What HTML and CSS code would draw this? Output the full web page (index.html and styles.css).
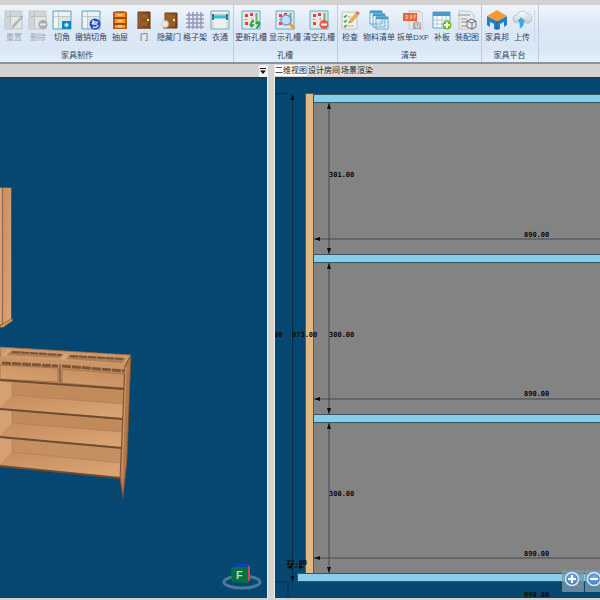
FILE: index.html
```html
<!DOCTYPE html>
<html lang="zh-CN">
<head>
<meta charset="utf-8">
<title>家具设计</title>
<link rel="stylesheet" href="styles.css">
</head>
<body>
<svg class="defs" aria-hidden="true">
  <defs>
    <linearGradient id="wood" x1="0" x2="1" y1="0" y2="0"><stop offset="0" stop-color="#dba473"/><stop offset="1" stop-color="#c68c5c"/></linearGradient>
    <linearGradient id="shelf" x1="0" x2="1" y1="0" y2="1"><stop offset="0" stop-color="#c68d5e"/><stop offset="1" stop-color="#dba677"/></linearGradient>
    <linearGradient id="drawer" x1="0" x2="1" y1="1" y2="0"><stop offset="0" stop-color="#daa574"/><stop offset="1" stop-color="#c48a5a"/></linearGradient>
    <linearGradient id="cloud" x1="0" x2="0" y1="0" y2="1"><stop offset="0" stop-color="#fff"/><stop offset="1" stop-color="#c5cbd0"/></linearGradient>
    <linearGradient id="door" x1="0" x2="1" y1="0" y2="0"><stop offset="0" stop-color="#b06e2b"/><stop offset="1" stop-color="#7b451c"/></linearGradient>
    <radialGradient id="lens" cx=".5" cy=".4" r=".6"><stop offset="0" stop-color="#7db7f2"/><stop offset="1" stop-color="#3577c4"/></radialGradient>
    <symbol id="board" viewBox="0 0 20 20"><path d="M1 1h18v18H1z" fill="#d7e1e5" stroke="#58a8c6"/><path d="M2 2h4v16H2zM6 2h12v4H6z" fill="#f2f2f0"/><path d="M7 7h11v11H7z" fill="#e1e4e4"/><path d="M6.500 2v16M2 6.500h16" stroke="#b8bdbe" stroke-width=".7"/></symbol>
    <symbol id="board-off" viewBox="0 0 20 20"><path d="M1 1h17v18H1z" fill="#dadddf" stroke="#c0c4c8"/><path d="M2 2h4v16H2zM6 2h12v4H6z" fill="#d2d4d7"/><path d="M6.500 2v16M2 6.500h16" stroke="#b7babd" stroke-width=".8"/><path d="M7 7h10v11H7z" fill="#e4e5e7"/></symbol>
    <symbol id="holes" viewBox="0 0 20 20"><path d="M1 1h18v18H1z" fill="#e4e9e7" stroke="#5eadd0"/><path d="M4 4h3v3H4zM9 3h3v3H9zM4 12h3v3H4z" fill="#f13c48"/><path d="M10 9l2-1v2zM4 9h2v1H4z" fill="#d47c7c"/><path d="M15.500 3v11" stroke="#5abd67" stroke-width="2"/></symbol>
  </defs>
</svg>

<header class="ribbon">
  <section class="group furniture">
    <div class="tools">
      <button class="tool" disabled><svg class="icon" viewBox="0 0 20 20"><use href="#board-off"/><path d="M8 18l1-3 9-9 1 1-9 10z" fill="#b7b9bb" stroke="#9da0a4" stroke-width=".6"/></svg>重置</button>
      <button class="tool" disabled><svg class="icon" viewBox="0 0 20 20"><use href="#board-off"/><circle cx="15" cy="14.500" r="4.500" fill="#a9acaf"/><path d="M12 14.500h6" stroke="#e8e9ea" stroke-width="2"/></svg>删除</button>
      <button class="tool"><svg class="icon" viewBox="0 0 20 20"><use href="#board"/><path d="M10 11h9v8h-9z" fill="#0b86bd"/><path d="M14.500 12.500v5M12 15h5M13 13.500l3 3M16 13.500l-3 3" stroke="#e8faff" stroke-width=".9"/></svg>切角</button>
      <button class="tool large"><svg class="icon" viewBox="0 0 20 20"><use href="#board"/><circle cx="14" cy="14" r="5.500" fill="#2451bb"/><path d="M11 14a3.500 3 0 0 1 6-1M17 15a3.500 3 0 0 1-5 2M12 10v4h4" fill="none" stroke="#dbe8ff" stroke-width="1.400"/></svg>撤销切角</button>
      <button class="tool"><svg class="icon" viewBox="0 0 20 20"><path d="M3 2q7-2 14 0v17H3z" fill="#b75b16"/><path d="M5 3h10v4H5zM5 9h10v4H5zM5 15h10v3H5z" fill="#f29c30"/><path d="M4 8h12M4 14h12" stroke="#7e3d13"/><path d="M8 5h4M8 11h4M8 16h4" stroke="#fff0b5"/></svg>抽屉</button>
      <button class="tool"><svg class="icon" viewBox="0 0 20 20"><path d="M4 2h12v16H4z" fill="url(#door)" stroke="#60391c"/><path d="M6 4h8v5H6zM6 11h8v5H6z" fill="#9a602b" stroke="#71411f" stroke-width=".6"/><circle cx="14" cy="10" r="1.200" fill="#ffe477"/><path d="M3 18.500h14" stroke="#8d6b4d"/></svg>门</button>
      <button class="tool medium"><svg class="icon" viewBox="0 0 20 20"><path d="M6 3h12v15H6z" fill="url(#door)" stroke="#60391c"/><path d="M8 5h8v4H8zM8 11h8v5H8z" fill="#9a602b"/><circle cx="15" cy="10" r="1.200" fill="#ffe477"/><circle cx="6" cy="14" r="3.500" fill="#e9e6dc" stroke="#b9b7b0" stroke-width=".6"/><path d="M4 17h4v2H4z" fill="#a4a5a3"/></svg>隐藏门</button>
      <button class="tool medium"><svg class="icon" viewBox="0 0 20 20"><path d="M4 2v17M8 2v17M12 2v17M16 2v17M1 5h18M1 9h18M1 13h18M1 17h18" stroke="#9997ba" stroke-width="1.500"/></svg>格子架</button>
      <button class="tool"><svg class="icon" viewBox="0 0 20 20"><path d="M1 1h18v18H1z" fill="#eef0ee" stroke="#61adc8"/><path d="M2 5h16" stroke="#c6cbcb" stroke-width="2"/><path d="M4 7h12" stroke="#2ac3db" stroke-width="3"/><path d="M3 4v6M17 4v6" stroke="#163f61" stroke-width="1.500"/><path d="M3 11v7M17 11v7" stroke="#c5cccc"/></svg>衣通</button>
    </div>
    <h2 class="group-name">家具制作</h2>
  </section>

  <section class="group">
    <div class="tools">
      <button class="tool large"><svg class="icon" viewBox="0 0 20 20"><use href="#holes"/><path d="M13 11q-3 0-3 4M9 14l1.500 2.500L13 14.500M15 18q3-1 3-4M19 14.500L17.500 12 15 14" fill="none" stroke="#279a40" stroke-width="1.800"/></svg>更新孔槽</button>
      <button class="tool large"><svg class="icon" viewBox="0 0 20 20"><use href="#holes"/><circle cx="11" cy="10" r="5" fill="#bfdffb" stroke="#719ccb" stroke-width="1.500"/><path d="M15 14l4 4" stroke="#e5a13b" stroke-width="3" stroke-linecap="round"/></svg>显示孔槽</button>
      <button class="tool large"><svg class="icon" viewBox="0 0 20 20"><use href="#holes"/><circle cx="15" cy="14.500" r="4.500" fill="#ed5545"/><path d="M12 14.500h6" stroke="#fff" stroke-width="2"/></svg>清空孔槽</button>
    </div>
    <h2 class="group-name">孔槽</h2>
  </section>

  <section class="group">
    <div class="tools">
      <button class="tool"><svg class="icon" viewBox="0 0 20 20"><path d="M2 2h15v17H2z" fill="#f2f1e9" stroke="#c2c4c3"/><path d="M4 6l1 1 2-2M4 11l1 1 2-2M4 16l1 1 2-2" fill="none" stroke="#45a14a" stroke-width="1.400"/><path d="M8 7h3M8 12h3M8 16h6" stroke="#9db49d"/><path d="M9 13l1-3 7-8 2 2-7 8z" fill="#f0b646" stroke="#a57339" stroke-width=".5"/><path d="M17 1l3 2-2 2-2-2z" fill="#cf6e75"/></svg>检查</button>
      <button class="tool large"><svg class="icon" viewBox="0 0 20 20"><path d="M1 1h12v13H1zM4 4h12v13H4zM7 7h12v12H7z" fill="#f5fbfd" stroke="#5ca9d1"/><path d="M1 2h12M4 5h12M7 8h12" stroke="#489acb" stroke-width="2.500"/><path d="M11 9v10M15 9v10M7 12h12M7 16h12" stroke="#aac7d4" stroke-width=".8"/></svg>物料清单</button>
      <button class="tool large"><svg class="icon" viewBox="0 0 20 20"><path d="M6 1h11l3 3v15H6z" fill="#e5e7e8" stroke="#c5c8ca"/><path d="M0 3h14v8H0z" fill="#e66530"/><path d="M3 5v4h1l1-2-1-2zM7 5l2 4M9 5l-2 4M11 9V5h2M11 7h2" fill="none" stroke="#ffd9c8" stroke-width=".7"/><path d="M10 13l3-2 5 2v6h-8z" fill="#a6aaad"/><path d="M13 13v4h3v-4" fill="none" stroke="#eee"/></svg>拆单DXF</button>
      <button class="tool"><svg class="icon" viewBox="0 0 20 20"><path d="M1 2h17v16H1z" fill="#fbfdfd" stroke="#5e9fc0"/><path d="M1 2h17v4H1z" fill="#449bcc"/><path d="M5 6v12M10 6v12M14 6v12M1 10h17M1 14h17" stroke="#a7cbd9"/><circle cx="15" cy="15" r="4.500" fill="#76b821"/><path d="M15 12v6M12 15h6" stroke="#fff" stroke-width="1.800"/></svg>补板</button>
      <button class="tool medium"><svg class="icon" viewBox="0 0 20 20"><path d="M2 1h11l4 4v14H2z" fill="#e9eaeb" stroke="#c3c5c8"/><path d="M1 5h12M4 9h6M4 12h6M4 16h6" stroke="#adb0b3" stroke-width="1.600"/><path d="M10 11l4-2 5 2v6l-4 2-5-2zM10 11l5 2 4-2M15 13v6" fill="#e8e8e8" stroke="#63676a" stroke-width=".9"/></svg>装配图</button>
    </div>
    <h2 class="group-name">清单</h2>
  </section>

  <section class="group platform">
    <div class="tools">
      <button class="tool medium"><svg class="icon" viewBox="0 0 20 20"><path d="M0 6l10 5 10-5v9l-3 2v-5l-4 2v5l-3 1-3-1v-5l-4-2v5l-3-2z" fill="#2480c6"/><path d="M0 6l10-6 10 6-10 5z" fill="#f69a30"/><path d="M10 11v8" stroke="#16639f"/></svg>家具邦</button>
      <button class="tool"><svg class="icon" viewBox="0 0 20 20"><path d="M5 13a4 4 0 0 1 0-8 5.500 5.500 0 0 1 10-1 4.500 4.500 0 0 1 1 9z" fill="url(#cloud)" stroke="#a7afb7" stroke-width=".7"/><path d="M9 7l6 5h-3q1 5-5 7 1-3 0-7H4z" fill="#41a5df" stroke="#e7f6ff" stroke-width=".6"/></svg>上传</button>
    </div>
    <h2 class="group-name">家具平台</h2>
  </section>
</header>

<main class="workspace">
  <section class="pane pane-model">
    <div class="bar"><button class="menu" aria-label="窗格菜单"><svg class="menu-icon" viewBox="0 0 8 8"><path d="M1 1.500h6" stroke="#111"/><path d="M1 3.500h6L4 7z" fill="#111"/></svg></button></div>
    <svg class="scene" viewBox="0 79 267 519" preserveAspectRatio="xMinYMin slice" role="img" aria-label="三维视图">
      <path d="M0 187.500h9V320l-9 5z" fill="url(#wood)"/>
      <path d="M2 187.500h9.500V319L2 325z" fill="url(#shelf)"/>
      <path d="M0 187.500h11.500V319" fill="none" stroke="#664326" stroke-width=".8"/>
      <path d="M2.500 188v136" stroke="#715038" stroke-width=".7"/>
      <path d="M0 325.500l12-7 1 2-10 7H0z" fill="#d19661" stroke="#704b2d" stroke-width=".6"/>
      <path d="M0 347l131 8-4 105-4 38-3-20L0 466z" fill="#c48f62"/>
      <path d="M0 347l131 8-6 11L0 359z" fill="#c99a6d" stroke="#8a6040" stroke-width=".8"/>
      <path d="M11 351l52 3-3 4-53-3zM69 355l57 3-4 5-55-4z" fill="#ae7d54"/>
      <path d="M12 352l50 3M70 356l54 3" stroke="#7a5436" stroke-width="2" stroke-dasharray="8 1"/>
      <path d="M8 349l4 1-7 6-4-1zM65 354l4 0-5 6-4-1z" fill="#d5a678"/>
      <path d="M0 357l125 8v4L0 362z" fill="#cc9565"/>
      <path d="M2 363l56 3M62 366l62 5" stroke="#7d5638" stroke-width="3" stroke-dasharray="9 1"/>
      <path d="M0 365l58 3v14L0 379zM62 369l62 5v14l-62-5z" fill="url(#drawer)" stroke="#8a6040" stroke-width=".6"/>
      <path d="M60 364v19" stroke="#6b452b"/>
      <path d="M12 383l111 8v15L12 396z" fill="#c08a5b"/>
      <path d="M0 381l12 2v12L0 408zM0 409l12 2v12L0 436zM0 437l12 3v12L0 465z" fill="#d5a072"/>
      <path d="M12 395l111 9v14L0 409z" fill="url(#shelf)"/>
      <path d="M12 411l111 8v15L12 424z" fill="#c08a5b"/>
      <path d="M12 423l111 9v15L0 437z" fill="url(#shelf)"/>
      <path d="M12 440l110 8v15L12 453z" fill="#c48f61"/>
      <path d="M12 452l110 11v14L0 466z" fill="url(#shelf)"/>
      <path d="M12 395l111 9M12 423l111 9M12 452l110 11M12 383v12M12 411v12M12 440v12" stroke="#a97c54" stroke-width=".6" fill="none"/>
      <path d="M0 380l124 9M0 409l123 10M0 437l122 11M0 466l120 12" stroke="#6f4b30" stroke-width="2"/>
      <path d="M131 355l-4 105-4 38-3-20 5-112z" fill="#b1784b" stroke="#6c482d" stroke-width=".8"/>
      <path d="M126 367l-4 112" stroke="#cf9a6a"/>
      <ellipse cx="242" cy="582" rx="18" ry="6" fill="none" stroke="#4e7898" stroke-width="3"/>
      <path d="M232 568l4-4h14l-2 4z" fill="#173eb0"/>
      <path d="M247 568l3-3v15l-3 3z" fill="#c04862"/>
      <path d="M231 567h17v16l-16-1z" fill="#08703c"/>
      <text class="cube" x="236" y="579">F</text>
    </svg>
  </section>

  <div class="splitter"></div>

  <section class="pane pane-plan">
    <nav class="bar tabs">
      <button class="tab active">二维视图</button><button class="tab">设计房间</button><button class="tab">场景渲染</button>
    </nav>
    <svg class="scene" viewBox="275 79 325 519" preserveAspectRatio="xMinYMin slice" role="img" aria-label="二维视图">
      <path d="M313 94h287v480H313z" fill="#838383"/>
      <path d="M305.500 93.500h8v480h-8z" fill="#e1b780" stroke="#5e584d"/>
      <g fill="#87ceeb" stroke="#355565">
        <path d="M313.500 94.500H604v8H313.500zM313.500 254.500H604v8H313.500zM313.500 414.500H604v8H313.500zM297.500 573.500H604v8H297.500z"/>
      </g>
      <g fill="none" stroke="#333d42" stroke-width=".8">
        <path d="M329 103v151M329 263v151M329 423v150M314 239h286M314 399h286M314 558h286"/>
      </g>
      <path d="M275 93.500h13M292.500 94v488M275 582h13v16M287 567h17" fill="none" stroke="#092d46"/>
      <g fill="#090d10">
        <path d="M329 103l-2 6h4zM329 254l-2-6h4zM329 263l-2 6h4zM329 414l-2-6h4zM329 423l-2 6h4zM329 573l-2-6h4z"/>
        <path d="M314 239l6-2v4zM314 399l6-2v4zM314 558l6-2v4z"/>
        <path d="M292.500 94l-2 6h4zM292.500 582l-2-6h4zM287 567l5-2v4zM304 567l-5-2v4z"/>
      </g>
      <g class="dims">
        <text x="329" y="177">301.00</text><text x="329" y="337">300.00</text><text x="329" y="496">300.00</text>
        <text x="524" y="237">890.00</text><text x="524" y="396">890.00</text><text x="524" y="556">890.00</text>
        <text x="524" y="597">990.00</text><text x="292" y="337">973.00</text><text x="274" y="337">00</text><text x="286" y="565">32.00</text>
      </g>
      <g>
        <path d="M562 570h22v22h-22zM585 570h20v22h-20z" fill="#7b98a7" fill-opacity=".8"/>
        <path d="M576 583l5 5M598 583l5 5" stroke="#82888a" stroke-width="3"/>
        <circle cx="572" cy="579" r="6.500" fill="url(#lens)" stroke="#dce9f3" stroke-width="1.500"/>
        <circle cx="594" cy="579" r="6.500" fill="url(#lens)" stroke="#dce9f3" stroke-width="1.500"/>
        <path d="M568 579h8M572 575v8M590 579h8" stroke="#fff" stroke-width="2"/>
      </g>
    </svg>
  </section>
</main>
</body>
</html>
```

FILE: styles.css
```css
* { box-sizing: border-box; }

body {
  margin: 0;
  height: 100vh;
  display: flex;
  flex-direction: column;
  overflow: hidden;
  background: #d2d2d2;
  color: #34455f;
  font-family: "Liberation Sans", "Noto Sans CJK SC", sans-serif;
  font-size: 8px;
  line-height: 10px;
}

button {
  margin: 0;
  padding: 0;
  border: 0;
  background: none;
  color: inherit;
  font: inherit;
  white-space: nowrap;
}

.defs {
  position: absolute;
  width: 0;
  height: 0;
}

.ribbon {
  display: flex;
  flex: none;
  padding-left: 2px;
  border-top: 5px solid #d2d2d2;
  border-bottom: 2px solid #8b949d;
  background: linear-gradient(#f0f5fb, #dce8f5 40%, #d9e6f5 75%, #e2effd);
}

.group {
  display: flex;
  flex-direction: column;
  justify-content: space-between;
  height: 57px;
  padding: 5px 1px 1px 0;
  border-right: 1px solid #bdcbdc;
}

.furniture .group-name { padding-right: 80px; }

.platform { padding: 5px 3px 1px 2px; }
.platform .tools { border-right: 1px solid #cbd7e5; }

.tools { display: flex; }

.tool {
  display: flex;
  flex-direction: column;
  align-items: center;
  gap: 3px;
  width: 24px;
}

.tool:disabled { color: #9aa8ba; }
.medium { width: 26px; }
.large { width: 34px; }

.icon {
  display: block;
  width: 20px;
  height: 20px;
}

.group-name {
  margin: 0;
  font-size: 8px;
  font-weight: 400;
  text-align: center;
}

.workspace {
  display: flex;
  flex: 1;
  min-height: 0;
  border-bottom: 2px solid #d2d2d2;
}

.pane {
  display: flex;
  flex-direction: column;
  min-width: 0;
}

.pane-model { flex: 267 1 0; }
.pane-plan { flex: 325 1 0; }

.splitter {
  width: 8px;
  background: #d4d4d4;
  border-right: 1px solid #eeeeee;
  border-left: 1px solid #eeeeee;
}

.bar {
  display: flex;
  flex: none;
  height: 15px;
  padding-top: 1px;
  border-bottom: 2px solid #103d5a;
  background: #d2d2d2;
}

.pane-model .bar { justify-content: flex-end; }

.menu {
  width: 8px;
  background: #f4f4f4;
}

.menu-icon {
  display: block;
  width: 8px;
  height: 8px;
}

.tabs { gap: 1px; }

.tab {
  width: 32px;
  height: 11px;
  background: #dcdcdc;
  color: #222222;
}

.active { background: #ffffff; }

.scene {
  display: block;
  flex: 1;
  width: 100%;
  min-height: 0;
  background: #064771;
}

.dims {
  fill: #080808;
  font: bold 7px "DejaVu Sans Mono", monospace;
}

.cube {
  fill: #b9d9c4;
  font: bold 11px "Liberation Sans", sans-serif;
}
```
